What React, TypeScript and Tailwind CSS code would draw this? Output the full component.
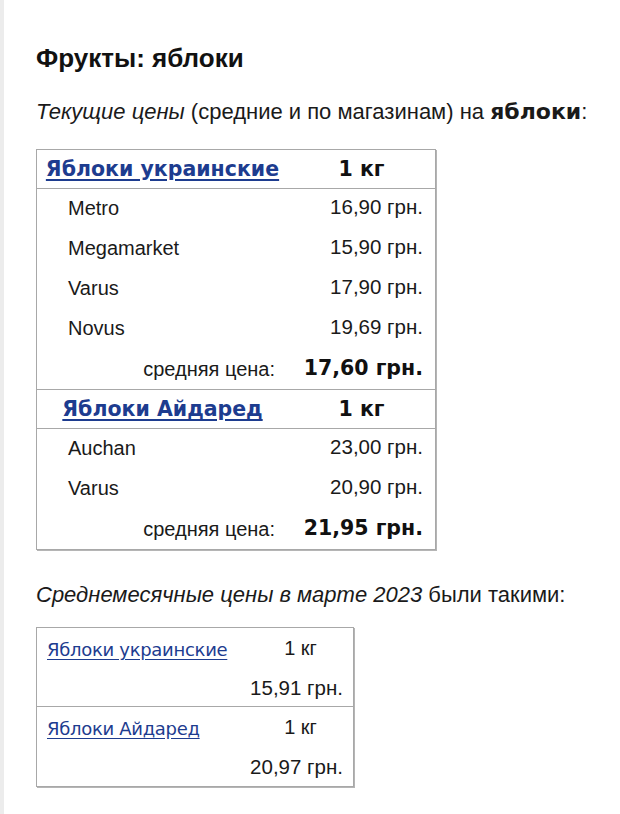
import React from "react";

const arial = "font-['Liberation_Sans',Arial,sans-serif]";
const verdana = "font-['DejaVu_Sans',Verdana,sans-serif]";

function StoreRow({ name, price }: { name: string; price: string }) {
  return (
    <div className="grid grid-cols-[251px_1fr] h-[40px] items-center pb-[3px]">
      <div className={`pl-[31px] text-[20px] text-[#1a1a1a] ${arial}`}>{name}</div>
      <div className={`pr-[12px] text-right text-[20.5px] text-[#1a1a1a] ${arial}`}>{price}</div>
    </div>
  );
}

function AvgRow({ price }: { price: string }) {
  return (
    <div className="grid grid-cols-[251px_1fr] h-[40px] items-center pb-[1px]">
      <div className={`pr-[13px] text-right text-[20px] text-[#1a1a1a] ${arial}`}>средняя цена:</div>
      <div className={`pr-[12px] text-right text-[20.5px] font-bold text-[#111] ${verdana}`}>{price}</div>
    </div>
  );
}

function HeaderRow({ name }: { name: string }) {
  return (
    <div className="grid grid-cols-[251px_1fr] h-[39px] items-center border-b border-[#a8a8a8]">
      <div className={`text-center text-[20.5px] font-bold whitespace-nowrap ${verdana}`}>
        <a href="#" className="text-[#1d3c8f] underline underline-offset-[3px]">{name}</a>
      </div>
      <div className={`text-center text-[20.5px] font-bold text-[#111] ${verdana}`}>1 кг</div>
    </div>
  );
}

function MonthRow({ name, price, last }: { name: string; price: string; last?: boolean }) {
  return (
    <div className={`grid grid-cols-[203px_1fr] h-[79px] ${last ? "" : "border-b border-[#a8a8a8]"}`}>
      <div className={`pl-[10px] pt-[8px] text-[18px] whitespace-nowrap ${verdana}`}>
        <a href="#" className="text-[#1d3c8f] underline underline-offset-[3px] tracking-[-0.3px]">{name}</a>
      </div>
      <div className={`flex flex-col items-center text-[20px] text-[#1a1a1a] ${arial}`}>
        <div className="h-[40px] flex items-center pl-[8px]">1 кг</div>
        <div className="h-[40px] flex items-center self-end mr-[10px] text-[20.5px] whitespace-nowrap">{price}</div>
      </div>
    </div>
  );
}

export default function App() {
  return (
    <div className="flex min-h-[814px] w-[620px] bg-white">
      <div className="w-[4px] bg-[#ececec] shrink-0" />
      <div className="pl-[32px] pt-[43px] flex flex-col">
        <h1 className={`text-[26px] font-bold text-[#111] leading-[30px] whitespace-nowrap ${arial}`}>Фрукты: яблоки</h1>
        <p className={`mt-[27px] text-[22px] text-[#1a1a1a] leading-[24px] whitespace-nowrap ${arial}`}>
          <i>Текущие цены</i> (средние и по магазинам) на <b className={verdana}>яблоки</b>:
        </p>
        <div className="mt-[25px] w-[400px] border border-[#a8a8a8] shadow-[1px_1px_0_#b5b5b5]">
          <HeaderRow name="Яблоки украинские" />
          <StoreRow name="Metro" price="16,90 грн." />
          <StoreRow name="Megamarket" price="15,90 грн." />
          <StoreRow name="Varus" price="17,90 грн." />
          <StoreRow name="Novus" price="19,69 грн." />
          <div className="border-b border-[#a8a8a8]">
            <AvgRow price="17,60 грн." />
          </div>
          <HeaderRow name="Яблоки Айдаред" />
          <StoreRow name="Auchan" price="23,00 грн." />
          <StoreRow name="Varus" price="20,90 грн." />
          <AvgRow price="21,95 грн." />
        </div>
        <p className={`mt-[33px] text-[22px] text-[#1a1a1a] leading-[24px] whitespace-nowrap ${arial}`}>
          <i>Среднемесячные цены в марте 2023</i> были такими:
        </p>
        <div className="mt-[20px] w-[318px] border border-[#a8a8a8] shadow-[1px_1px_0_#b5b5b5]">
          <MonthRow name="Яблоки украинские" price="15,91 грн." />
          <MonthRow name="Яблоки Айдаред" price="20,97 грн." last />
        </div>
      </div>
    </div>
  );
}
